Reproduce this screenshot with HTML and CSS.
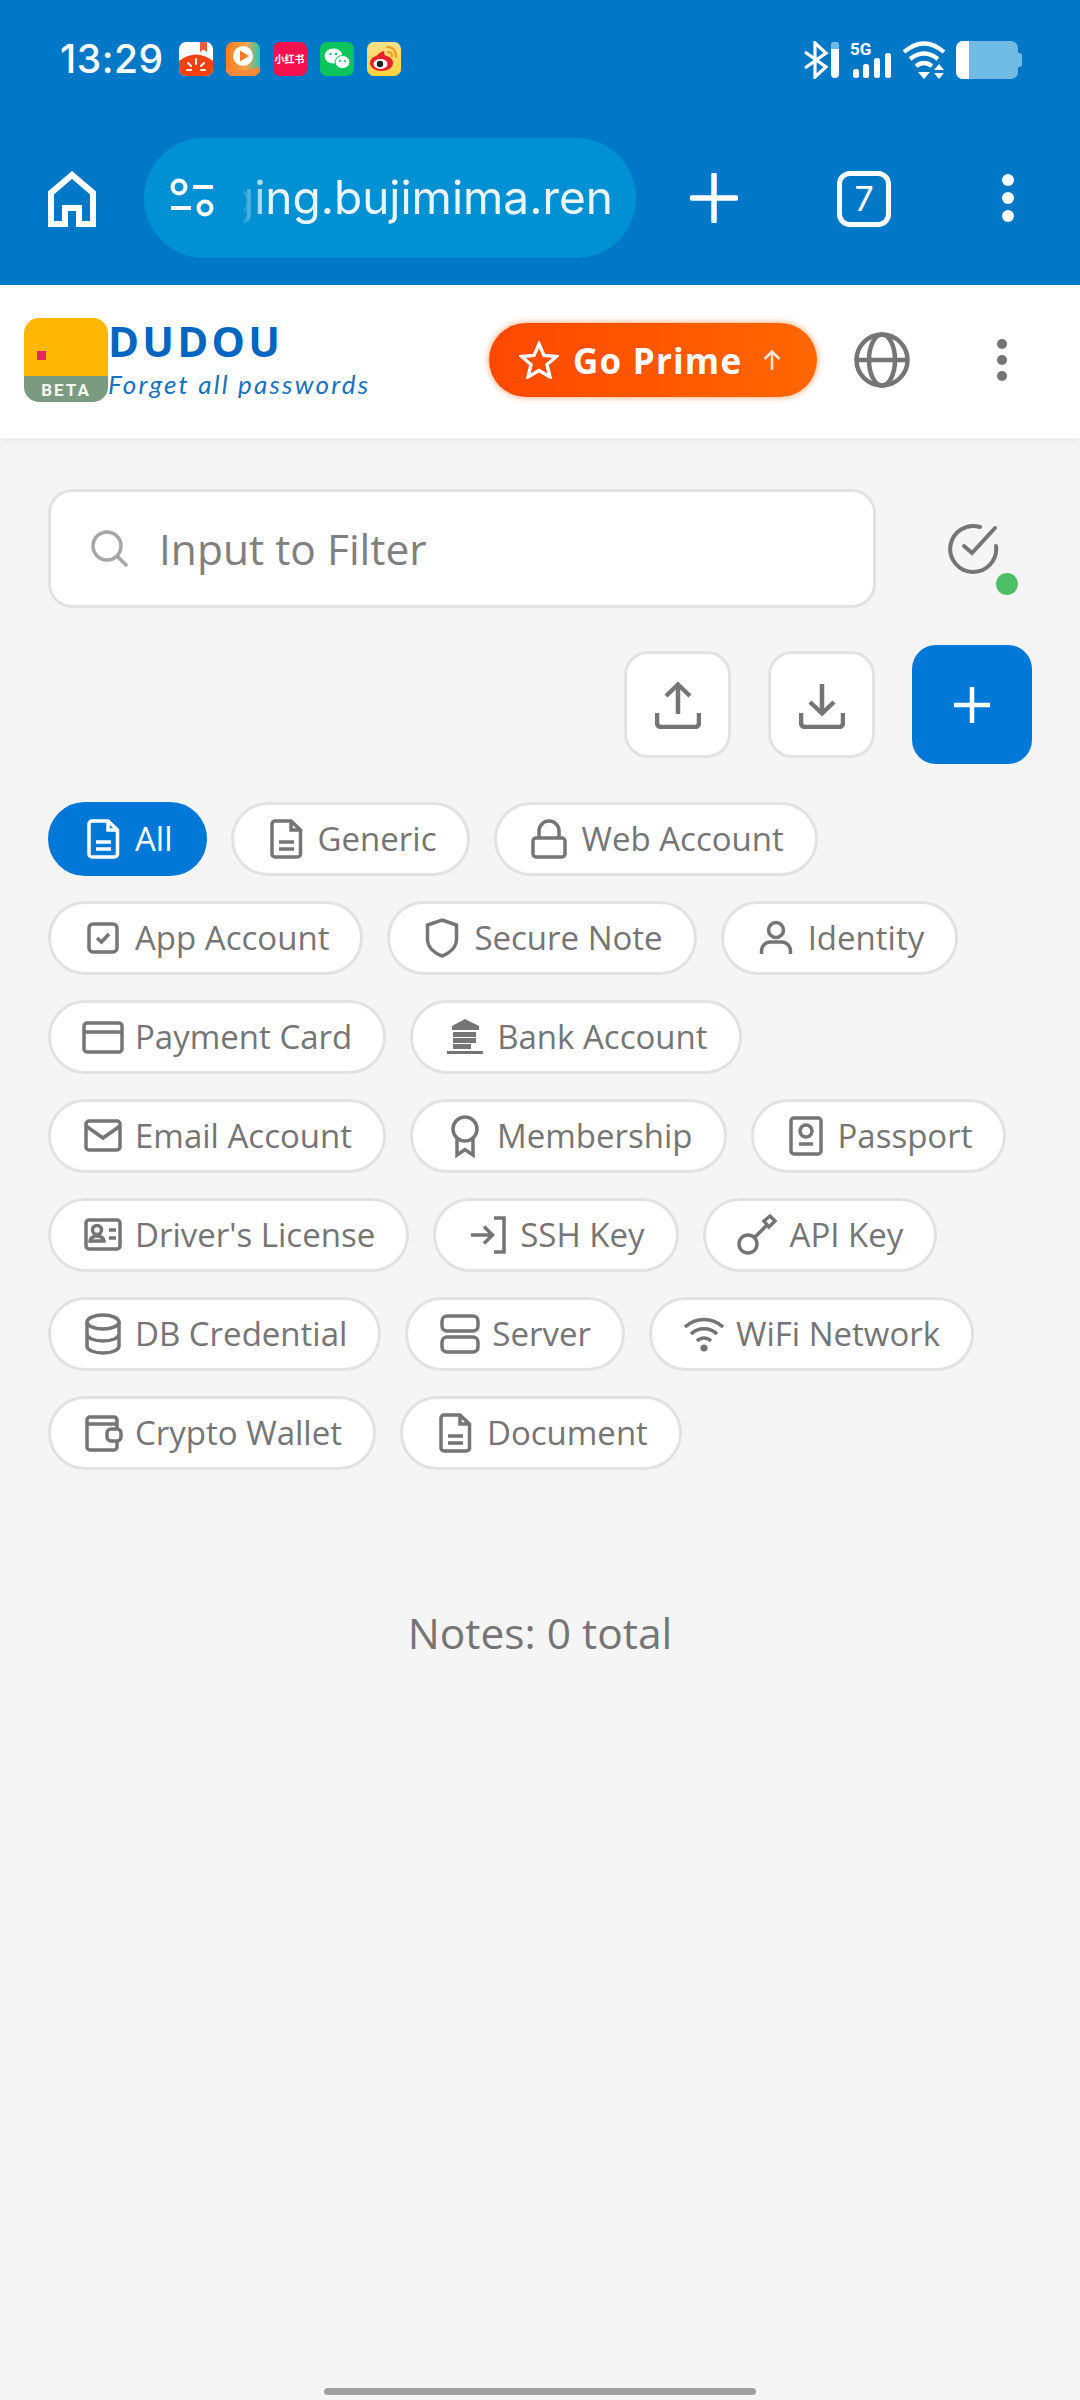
FILE: index.html
```html
<!DOCTYPE html>
<html lang="en">
<head>
  <meta charset="UTF-8" />
  <meta name="viewport" content="width=device-width, initial-scale=1" />
  <title>Dudou</title>
  <link rel="stylesheet" href="styles.css">
</head>
<body>
  <!-- Phone status bar + browser toolbar -->
  <header class="browser">
    <div class="status-bar">
      <div class="status-left">
        <span class="time">13:29</span>
        <div class="notif-icons">
          <svg class="notif" viewBox="0 0 34 34">
            <rect width="34" height="34" rx="7" fill="#fff"/>
            <path d="M0 19 Q17 6 34 19 V27 a7 7 0 0 1 -7 7 H7 a7 7 0 0 1 -7 -7 Z" fill="#f5400f"/>
            <path d="M21 0h7v10l-3.500-2.500L21 10Z" fill="#ef5a3c"/>
            <path d="M17 17v5M9 21l3 3M25 21l-3 3M8 28h4M22 28h4" stroke="#fff" stroke-width="2" stroke-linecap="round"/>
          </svg>
          <svg class="notif" viewBox="0 0 34 34">
            <defs>
              <linearGradient id="videoBg" x1="0" y1="0" x2="1" y2="0">
                <stop offset="0" stop-color="#f97c1e"/>
                <stop offset="0.6" stop-color="#f5a34a"/>
                <stop offset="1" stop-color="#20c8b8"/>
              </linearGradient>
            </defs>
            <rect width="34" height="34" rx="7" fill="url(#videoBg)"/>
            <path d="M0 26 Q17 32 34 24 V27 a7 7 0 0 1 -7 7 H7 a7 7 0 0 1 -7 -7 Z" fill="#f98a3c"/>
            <circle cx="17" cy="14" r="10" fill="#fff"/>
            <path d="M14 8.500 L23 14 L14 19.500 Z" fill="#f57a22"/>
          </svg>
          <div class="notif notif-red">小红书</div>
          <svg class="notif" viewBox="0 0 34 34">
            <rect width="34" height="34" rx="7" fill="#0cc45c"/>
            <ellipse cx="13.500" cy="14" rx="9" ry="7.500" fill="#fff"/>
            <ellipse cx="22.500" cy="20" rx="7.500" ry="6.500" fill="#fff" stroke="#0cc45c" stroke-width="1"/>
            <circle cx="10.500" cy="12" r="1.200" fill="#0cc45c"/>
            <circle cx="16" cy="12" r="1.200" fill="#0cc45c"/>
            <circle cx="20" cy="19" r="1" fill="#0cc45c"/>
            <circle cx="25" cy="19" r="1" fill="#0cc45c"/>
          </svg>
          <svg class="notif" viewBox="0 0 34 34">
            <defs>
              <linearGradient id="weiboBg" x1="0" y1="0" x2="0" y2="1">
                <stop offset="0" stop-color="#fbe08c"/>
                <stop offset="1" stop-color="#ffd43a"/>
              </linearGradient>
            </defs>
            <rect width="34" height="34" rx="7" fill="url(#weiboBg)"/>
            <ellipse cx="14.500" cy="21" rx="11.500" ry="8" fill="#e8222c"/>
            <path d="M17 9 Q12 10 8 16 L18 15 Z" fill="#e8222c"/>
            <ellipse cx="13.500" cy="22" rx="7" ry="5" fill="#fff"/>
            <circle cx="13" cy="22" r="3.200" fill="#222"/>
            <path d="M20 5 Q29 5 29 15M21 10 Q25 10 25 14" fill="none" stroke="#f59a23" stroke-width="2.200" stroke-linecap="round"/>
          </svg>
        </div>
      </div>
      <div class="status-right">
        <svg class="sys-bt" viewBox="0 0 36 38">
          <path d="M2 11 L23 26 L12 36 V2 L23 12 L2 27" fill="none" stroke="#fff" stroke-width="3.200"/>
          <rect x="28" y="1" width="8" height="36" rx="4" fill="#fff"/>
          <path d="M28 8 V5 a4 4 0 0 1 8 0 V8 Z" fill="#6bb8e4"/>
        </svg>
        <div class="sys-signal">
          <span class="five-g">5G</span>
          <svg class="signal-bars" viewBox="0 0 40 38">
            <rect x="2" y="28" width="6" height="9" rx="2.500" fill="#fff"/>
            <rect x="12" y="23" width="6" height="14" rx="2.500" fill="#fff"/>
            <rect x="23" y="17" width="6" height="20" rx="2.500" fill="#fff"/>
            <rect x="34" y="12" width="6" height="25" rx="2.500" fill="#fff"/>
          </svg>
        </div>
        <svg class="sys-wifi" viewBox="0 0 46 38">
          <path d="M2 11 Q22 -6 42 11M8 18 Q22 7 36 18M14 25 Q22 19 30 25" fill="none" stroke="#fff" stroke-width="4.200"/>
          <path d="M16 31 H28 L22 38 Z" fill="#fff"/>
          <path d="M37 23 L42 29 H32 Z M32 32 H42 L37 38 Z" fill="#fff"/>
        </svg>
        <div class="battery"><div class="battery-fill"></div></div>
      </div>
    </div>
    <div class="toolbar">
      <svg class="tool-home" viewBox="0 0 48 56">
        <path d="M3 53 V22 L24 4 L45 22 V53 H31 V37 H17 V53 Z" fill="none" stroke="#fff" stroke-width="6"/>
      </svg>
      <div class="url-pill">
        <svg class="url-tune" viewBox="0 0 46 40">
          <circle cx="10" cy="9" r="6.500" fill="none" stroke="#fff" stroke-width="4"/>
          <path d="M24 9 H44 M2 30 H22" stroke="#fff" stroke-width="4"/>
          <circle cx="36" cy="30" r="6.500" fill="none" stroke="#fff" stroke-width="4"/>
        </svg>
        <div class="url-text"><span>ging.bujimima.ren</span></div>
      </div>
      <svg class="tool-plus" viewBox="0 0 48 50">
        <path d="M24 2 V48 M2 25 H46" stroke="#fff" stroke-width="5.500" stroke-linecap="round"/>
      </svg>
      <div class="tab-count">7</div>
      <svg class="tool-dots" viewBox="0 0 12 48">
        <circle cx="6" cy="6" r="6" fill="#fff"/>
        <circle cx="6" cy="24" r="6" fill="#fff"/>
        <circle cx="6" cy="42" r="6" fill="#fff"/>
      </svg>
    </div>
  </header>

  <!-- App bar -->
  <div class="app-bar">
    <div class="brand">
      <div class="logo">
        <div class="logo-top"><span class="logo-glyph"></span></div>
        <div class="logo-beta">BETA</div>
      </div>
      <div class="brand-text">
        <div class="brand-name">DUDOU</div>
        <div class="brand-tag">Forget all passwords</div>
      </div>
    </div>
    <button class="prime-btn">
      <svg class="prime-star" viewBox="0 0 40 38">
        <path d="M20 3 L25 14.500 L37.500 15.500 L28 23.500 L31 36 L20 29.500 L9 36 L12 23.500 L2.500 15.500 L15 14.500 Z" fill="none" stroke="#fff" stroke-width="3.400" stroke-linejoin="miter"/>
      </svg>
      <span>Go Prime</span>
      <svg class="prime-arrow" viewBox="0 0 20 22">
        <path d="M10 21 V3 M2.500 10 L10 2.500 L17.500 10" fill="none" stroke="#ffe3d2" stroke-width="2.600"/>
      </svg>
    </button>
    <svg class="globe" viewBox="0 0 56 58">
      <g fill="none" stroke="#757575" stroke-width="4.500">
        <circle cx="28" cy="29" r="25.500"/>
        <ellipse cx="28" cy="29" rx="13" ry="25.500"/>
        <path d="M2 29 H54"/>
      </g>
    </svg>
    <svg class="app-dots" viewBox="0 0 10 42">
      <circle cx="5" cy="5" r="5" fill="#757575"/>
      <circle cx="5" cy="21" r="5" fill="#757575"/>
      <circle cx="5" cy="37" r="5" fill="#757575"/>
    </svg>
  </div>

  <main class="page">
    <div class="filter-row">
      <div class="search-box">
        <svg class="search-icon" viewBox="0 0 40 40">
          <circle cx="17" cy="17" r="14" fill="none" stroke="#a6a6a6" stroke-width="3.500"/>
          <path d="M27 27 L37 37" stroke="#a6a6a6" stroke-width="3.500"/>
        </svg>
        <span class="search-placeholder">Input to Filter</span>
      </div>
      <div class="sync-status">
        <svg class="sync-icon" viewBox="0 0 52 54">
          <path d="M49 24 A23 23 0 1 1 33 5" fill="none" stroke="#757575" stroke-width="4" stroke-linecap="round"/>
          <path d="M17 24 L25 31 L48 6" fill="none" stroke="#757575" stroke-width="4" stroke-linecap="round"/>
        </svg>
        <span class="sync-dot"></span>
      </div>
    </div>

    <div class="action-row">
      <button class="icon-btn">
        <svg viewBox="0 0 46 48">
          <path d="M23 33 V4 M11 15 L23 3.500 L35 15" fill="none" stroke="#757575" stroke-width="4.500"/>
          <path d="M2 32 V42 a4 4 0 0 0 4 4 H40 a4 4 0 0 0 4 -4 V32" fill="none" stroke="#757575" stroke-width="4.500"/>
        </svg>
      </button>
      <button class="icon-btn">
        <svg viewBox="0 0 46 48">
          <path d="M23 3 V32 M11 21 L23 32.500 L35 21" fill="none" stroke="#757575" stroke-width="4.500"/>
          <path d="M2 32 V42 a4 4 0 0 0 4 4 H40 a4 4 0 0 0 4 -4 V32" fill="none" stroke="#757575" stroke-width="4.500"/>
        </svg>
      </button>
      <button class="add-btn">
        <svg viewBox="0 0 36 36"><path d="M18 0 V36 M0 18 H36" stroke="#fff" stroke-width="4.500"/></svg>
      </button>
    </div>

    <div class="chips">
      <div class="chip chip-active">
        <svg class="chip-icon" viewBox="0 0 44 44"><g class="ic"><path d="M11 4 H27 L36.500 13 V37 a3 3 0 0 1 -3 3 H11 a3 3 0 0 1 -3 -3 V7 a3 3 0 0 1 3 -3 Z M27 4 V13 H36.500 M15 25 H30 M15 32 H30"/></g></svg>
        All
      </div>
      <div class="chip">
        <svg class="chip-icon" viewBox="0 0 44 44"><g class="ic"><path d="M11 4 H27 L36.500 13 V37 a3 3 0 0 1 -3 3 H11 a3 3 0 0 1 -3 -3 V7 a3 3 0 0 1 3 -3 Z M27 4 V13 H36.500 M15 25 H30 M15 32 H30"/></g></svg>
        Generic
      </div>
      <div class="chip">
        <svg class="chip-icon" viewBox="0 0 44 44"><g class="ic"><path d="M12 21 V14 a10 10 0 0 1 20 0 V21"/><rect x="6" y="21" width="32" height="19" rx="3"/></g></svg>
        Web Account
      </div>
      <div class="chip">
        <svg class="chip-icon" viewBox="0 0 44 44"><g class="ic"><rect x="8" y="8" width="28" height="28" rx="4"/><path d="M16 22 L20.500 26 L28 18"/></g></svg>
        App Account
      </div>
      <div class="chip">
        <svg class="chip-icon" viewBox="0 0 44 44"><g class="ic"><path d="M22 4 L36.500 9 V23 C36.500 31 30 37 22 40 C14 37 7.500 31 7.500 23 V9 Z"/></g></svg>
        Secure Note
      </div>
      <div class="chip">
        <svg class="chip-icon" viewBox="0 0 44 44"><g class="ic"><circle cx="22" cy="14" r="7.500"/><path d="M7.500 38 V35 a9 9 0 0 1 9 -9 H27.500 a9 9 0 0 1 9 9 V38"/></g></svg>
        Identity
      </div>
      <div class="chip">
        <svg class="chip-icon" viewBox="0 0 44 44"><g class="ic"><rect x="3" y="8" width="38" height="29" rx="3"/><path d="M3 17 H41"/></g></svg>
        Payment Card
      </div>
      <div class="chip">
        <svg class="chip-icon" viewBox="0 0 44 44">
          <path d="M22 4 L36 11 V15 H9 V11 Z" fill="#757575"/>
          <rect x="10" y="17" width="23" height="5" fill="#757575"/>
          <rect x="10" y="23" width="23" height="5" fill="#757575"/>
          <rect x="10" y="29" width="18" height="5" fill="#757575"/>
          <rect x="4" y="36" width="36" height="3" fill="#757575"/>
        </svg>
        Bank Account
      </div>
      <div class="chip">
        <svg class="chip-icon" viewBox="0 0 44 44"><g class="ic"><rect x="5" y="7" width="34" height="29" rx="3"/><path d="M5 12 L22 24 L39 12"/></g></svg>
        Email Account
      </div>
      <div class="chip">
        <svg class="chip-icon" viewBox="0 0 44 44"><g class="ic"><circle cx="22" cy="15" r="12"/><path d="M14 25 V41 L22 35.500 L30 41 V25"/></g></svg>
        Membership
      </div>
      <div class="chip">
        <svg class="chip-icon" viewBox="0 0 44 44"><g class="ic"><rect x="7" y="4" width="30" height="36" rx="3"/><circle cx="22" cy="17" r="6"/><path d="M15 30 H29"/></g></svg>
        Passport
      </div>
      <div class="chip">
        <svg class="chip-icon" viewBox="0 0 44 44"><g class="ic"><rect x="5" y="7" width="34" height="29" rx="3"/><circle cx="16" cy="17" r="4.500"/><path d="M9 28 a7 5 0 0 1 14 0 Z M28 17 H35 M28 25 H35"/></g></svg>
        Driver's License
      </div>
      <div class="chip">
        <svg class="chip-icon" viewBox="0 0 44 44"><g class="ic"><path d="M5 22 H26 M18 13.500 L26.500 22 L18 30.500 M28 5 H38 V39 H28"/></g></svg>
        SSH Key
      </div>
      <div class="chip">
        <svg class="chip-icon" viewBox="0 0 44 44"><g class="ic"><circle cx="12" cy="31" r="9"/><path d="M19 24 L32 11 M28 8 L34 3 L39 8 L33 14 Z"/></g></svg>
        API Key
      </div>
      <div class="chip">
        <svg class="chip-icon" viewBox="0 0 44 44"><g class="ic"><ellipse cx="22" cy="10" rx="16" ry="7"/><path d="M6 10 V34 C6 38 13 41 22 41 C31 41 38 38 38 34 V10 M6 22 C6 26 13 29 22 29 C31 29 38 26 38 22"/></g></svg>
        DB Credential
      </div>
      <div class="chip">
        <svg class="chip-icon" viewBox="0 0 44 44"><g class="ic"><rect x="4" y="4" width="36" height="15" rx="5"/><rect x="4" y="25" width="36" height="15" rx="5"/></g></svg>
        Server
      </div>
      <div class="chip">
        <svg class="chip-icon" viewBox="0 0 44 44">
          <g class="ic"><path d="M3 15 C14 5 30 5 41 15 M9 22 C16 15 28 15 35 22 M15 29 C19 25 25 25 29 29"/></g>
          <circle cx="22" cy="36" r="3.500" fill="#757575"/>
        </svg>
        WiFi Network
      </div>
      <div class="chip">
        <svg class="chip-icon" viewBox="0 0 44 44"><g class="ic"><path d="M36 18 V9 a3 3 0 0 0 -3 -3 H9 a3 3 0 0 0 -3 3 V36 a3 3 0 0 0 3 3 H33 a3 3 0 0 0 3 -3 V31 M6 13 H36"/><rect x="26" y="18" width="14" height="12" rx="4"/></g></svg>
        Crypto Wallet
      </div>
      <div class="chip">
        <svg class="chip-icon" viewBox="0 0 44 44"><g class="ic"><path d="M11 4 H27 L36.500 13 V37 a3 3 0 0 1 -3 3 H11 a3 3 0 0 1 -3 -3 V7 a3 3 0 0 1 3 -3 Z M27 4 V13 H36.500 M15 25 H30 M15 32 H30"/></g></svg>
        Document
      </div>
    </div>

    <p class="notes-total">Notes: 0 total</p>
  </main>

  <div class="home-bar"></div>
</body>
</html>
```

FILE: styles.css
```css
* {
  box-sizing: border-box;
}
body {
  margin: 0;
  width: 1080px;
  height: 2400px;
  display: flex;
  flex-direction: column;
  overflow: hidden;
  font-family: "Open Sans", sans-serif;
  background: #f5f5f5;
  color: #757575;
}
button {
  font-family: inherit;
  padding: 0;
  cursor: pointer;
}

/* --- BROWSER CHROME --- */
.browser {
  height: 285px;
  flex-shrink: 0;
  background: #0078c8;
  color: white;
}
.status-bar {
  height: 139px;
  padding: 41px 20px 0 60px;
  display: flex;
  justify-content: space-between;
  align-items: flex-start;
}
.status-left {
  display: flex;
  align-items: center;
  gap: 15px;
}
.time {
  font-family: Inter, sans-serif;
  font-size: 39px;
  line-height: 36px;
  font-weight: 500;
  letter-spacing: 0.5px;
}
.notif-icons {
  display: flex;
  gap: 13px;
}
.notif {
  width: 34px;
  height: 34px;
  display: block;
}
.notif-red {
  background: #f5114e;
  border-radius: 7px;
  color: white;
  font-family: "Noto Sans CJK SC", sans-serif;
  font-size: 10px;
  font-weight: 700;
  line-height: 34px;
  text-align: center;
  white-space: nowrap;
  overflow: hidden;
}
.status-right {
  display: flex;
  align-items: flex-start;
  gap: 10px;
  padding-right: 42px;
}
.sys-bt {
  width: 36px;
  height: 38px;
}
.sys-signal {
  position: relative;
  width: 42px;
  height: 38px;
  margin-left: 1px;
}
.five-g {
  position: absolute;
  left: 0;
  top: 0;
  font-family: Roboto, sans-serif;
  font-weight: 700;
  font-size: 17px;
  line-height: 16px;
}
.signal-bars {
  display: block;
  width: 42px;
  height: 38px;
}
.sys-wifi {
  width: 46px;
  height: 38px;
}
.battery {
  position: relative;
  width: 62px;
  height: 38px;
  margin-left: -2px;
  background: #70bce6;
  border-radius: 7px;
}
.battery::after {
  content: "";
  position: absolute;
  right: -4px;
  top: 12px;
  width: 4px;
  height: 14px;
  background: #70bce6;
  border-radius: 0 3px 3px 0;
}
.battery-fill {
  width: 13px;
  height: 38px;
  background: white;
  border-radius: 7px 0 0 7px;
}
.toolbar {
  display: flex;
  align-items: center;
  height: 118px;
  padding-left: 48px;
}
.tool-home {
  width: 48px;
  height: 56px;
  margin-top: 2px;
  flex-shrink: 0;
}
.url-pill {
  width: 492px;
  height: 120px;
  margin-left: 48px;
  padding: 0 23px 0 25px;
  border-radius: 60px;
  background: #0090d4;
  display: flex;
  align-items: center;
  flex-shrink: 0;
}
.url-tune {
  width: 46px;
  height: 40px;
  flex-shrink: 0;
}
.url-text {
  flex: 1;
  margin-left: 28px;
  padding-bottom: 3px;
  display: flex;
  justify-content: flex-end;
  overflow: hidden;
  white-space: nowrap;
  font-family: Inter, sans-serif;
  font-size: 46px;
  color: #eaf6fd;
  -webkit-mask-image: linear-gradient(to right, rgba(0,0,0,0.1) 0, #000 24px);
  mask-image: linear-gradient(to right, rgba(0,0,0,0.1) 0, #000 24px);
}
.tool-plus {
  width: 48px;
  height: 50px;
  margin-left: 54px;
  flex-shrink: 0;
}
.tab-count {
  width: 54px;
  height: 56px;
  margin-left: 99px;
  margin-top: 2px;
  border: 5px solid white;
  border-radius: 13px;
  font-family: Inter, sans-serif;
  font-size: 34px;
  line-height: 46px;
  text-align: center;
  flex-shrink: 0;
}
.tool-dots {
  width: 12px;
  height: 48px;
  margin-left: 111px;
  flex-shrink: 0;
}

/* --- APP BAR --- */
.app-bar {
  height: 153px;
  flex-shrink: 0;
  padding: 0 0 3px 24px;
  background: white;
  box-shadow: 0 2px 8px rgba(0,0,0,0.06);
  display: flex;
  align-items: center;
  position: relative;
}
.brand {
  display: flex;
  align-items: center;
  width: 465px;
  flex-shrink: 0;
}
.logo {
  width: 84px;
  height: 84px;
  border-radius: 15px;
  overflow: hidden;
  flex-shrink: 0;
}
.logo-top {
  height: 58px;
  background: #ffb703;
  padding: 33px 0 0 13px;
}
.logo-glyph {
  display: block;
  width: 9px;
  height: 9px;
  background: #e8245c;
}
.logo-beta {
  height: 26px;
  background: #7a9b80;
  color: #f4f6f2;
  font-family: Roboto, sans-serif;
  font-size: 17px;
  font-weight: 700;
  letter-spacing: 2px;
  line-height: 28px;
  text-align: center;
}
.brand-text {
  margin-left: 0;
  margin-top: -4px;
}
.brand-name {
  font-size: 42px;
  line-height: 46px;
  font-weight: 700;
  letter-spacing: 3.200px;
  color: #0066c0;
}
.brand-tag {
  margin-top: 5px;
  font-family: Lato, sans-serif;
  font-size: 26px;
  line-height: 30px;
  font-style: italic;
  letter-spacing: 2.200px;
  color: #1572bd;
  white-space: nowrap;
}
.prime-btn {
  width: 328px;
  height: 74px;
  flex-shrink: 0;
  border: none;
  border-radius: 37px;
  background: linear-gradient(90deg, #ff4800, #ff6600);
  box-shadow: 0 0 6px rgba(255,110,20,0.7);
  color: white;
  font-size: 35px;
  font-weight: 700;
  letter-spacing: 1.200px;
  display: flex;
  align-items: center;
  padding-left: 30px;
}
.prime-star {
  width: 40px;
  height: 38px;
  margin-right: 14px;
}
.prime-arrow {
  width: 20px;
  height: 22px;
  margin-left: 20px;
}
.globe {
  width: 56px;
  height: 58px;
  margin-left: 37px;
  flex-shrink: 0;
}
.app-dots {
  width: 10px;
  height: 42px;
  margin-left: 87px;
  flex-shrink: 0;
}

/* --- PAGE --- */
.page {
  flex: 1;
  padding: 51px 48px 0 48px;
}
.filter-row {
  display: flex;
  align-items: center;
}
.search-box {
  width: 828px;
  height: 119px;
  background: white;
  border: 3px solid #e2e2e2;
  border-radius: 24px;
  display: flex;
  align-items: center;
  padding-left: 39px;
}
.search-icon {
  width: 40px;
  height: 40px;
  flex-shrink: 0;
}
.search-placeholder {
  margin-left: 29px;
  font-size: 42.500px;
  color: #808080;
}
.sync-status {
  position: relative;
  width: 52px;
  height: 54px;
  margin-left: 71px;
}
.sync-icon {
  display: block;
  width: 52px;
  height: 54px;
}
.sync-dot {
  position: absolute;
  right: -19px;
  bottom: -19px;
  width: 22px;
  height: 22px;
  border-radius: 50%;
  background: #4fbf67;
}
.action-row {
  display: flex;
  justify-content: flex-end;
  align-items: center;
  gap: 37px;
  margin-top: 37px;
}
.icon-btn {
  width: 107px;
  height: 107px;
  background: white;
  border: 3px solid #e2e2e2;
  border-radius: 24px;
  display: flex;
  align-items: center;
  justify-content: center;
}
.icon-btn svg {
  width: 46px;
  height: 48px;
}
.add-btn {
  width: 120px;
  height: 119px;
  border: none;
  border-radius: 24px;
  background: #0078d8;
  display: flex;
  align-items: center;
  justify-content: center;
}
.add-btn svg {
  width: 36px;
  height: 36px;
}
.chips {
  display: flex;
  flex-wrap: wrap;
  gap: 25px 24px;
  margin-top: 38px;
}
.chip {
  height: 74px;
  padding: 0 31px 2px 30px;
  background: white;
  border: 3px solid #e2e2e2;
  border-radius: 37px;
  display: flex;
  align-items: center;
  gap: 10px;
  font-size: 33px;
  white-space: nowrap;
}
.chip-icon {
  width: 44px;
  height: 44px;
  flex-shrink: 0;
  margin-top: 2px;
}
.ic {
  fill: none;
  stroke: #757575;
  stroke-width: 3.500;
}
.chip-active {
  background: #0078d8;
  border-color: #0078d8;
  color: white;
}
.chip-active .ic {
  stroke: white;
}
.notes-total {
  margin: 136px 0 0 0;
  text-align: center;
  font-size: 42.500px;
  line-height: 54px;
}
.home-bar {
  position: absolute;
  left: 324px;
  top: 2388px;
  width: 432px;
  height: 7px;
  border-radius: 4px;
  background: #a0a0a0;
}
```
